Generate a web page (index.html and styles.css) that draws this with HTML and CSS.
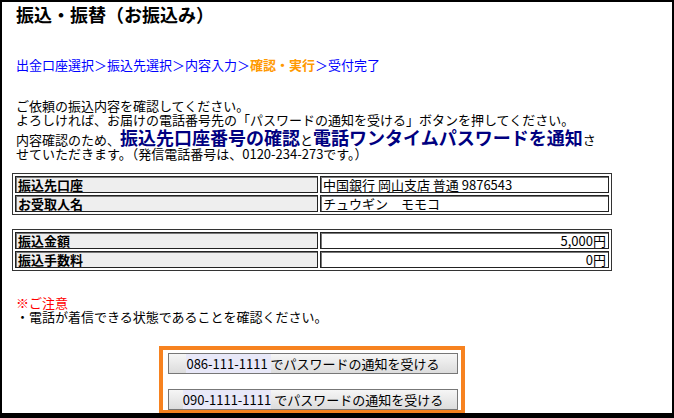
FILE: index.html
```html
<!DOCTYPE html>
<html lang="ja">
<head>
<meta charset="utf-8">
<title>振込・振替（お振込み）</title>
<link rel="stylesheet" href="styles.css">
</head>
<body>
<div class="frame">
  <div class="content">
    <h1 class="title">振込・振替（お振込み）</h1>
    <div class="steps">
      <span class="step">出金口座選択＞振込先選択＞内容入力＞</span><span class="step-current">確認・実行</span><span class="step">＞受付完了</span>
    </div>
    <div class="intro">
      <div class="intro-line">ご依頼の振込内容を確認してください。</div>
      <div class="intro-line">よろしければ、お届けの電話番号先の「パスワードの通知を受ける」ボタンを押してください。</div>
      <div class="intro-line intro-big">内容確認のため、<span class="emph">振込先口座番号の確認</span>と<span class="emph">電話ワンタイムパスワードを通知</span>さ</div>
      <div class="intro-line">せていただきます。（発信電話番号は、0120-234-273です。）</div>
    </div>

    <table class="info">
      <tr><th class="label">振込先口座</th><td class="value">中国銀行 岡山支店 普通 9876543</td></tr>
      <tr><th class="label">お受取人名</th><td class="value">チュウギン　モモコ</td></tr>
    </table>

    <table class="info info-second">
      <tr><th class="label">振込金額</th><td class="value num">5,000円</td></tr>
      <tr><th class="label">振込手数料</th><td class="value num">0円</td></tr>
    </table>

    <div class="notice">
      <div class="notice-head">※ご注意</div>
      <div class="notice-body">・電話が着信できる状態であることを確認ください。</div>
    </div>

    <div class="actions-wrap">
      <div class="actions">
        <button class="notify-btn" type="button"><span class="phone">086-111-1111 </span>でパスワードの通知を受ける</button>
        <button class="notify-btn" type="button"><span class="phone">090-1111-1111</span> でパスワードの通知を受ける</button>
      </div>
    </div>
  </div>
</div>
</body>
</html>
```

FILE: styles.css
```css
* { box-sizing: border-box; }

html, body {
  margin: 0;
  padding: 0;
  background: #ffffff;
}

body {
  font-family: "Noto Sans CJK JP", "Noto Sans", sans-serif;
  font-size: 13px;
  color: #000000;
}

.frame {
  width: 674px;
  height: 418px;
  border: 2px solid #000000;
  border-bottom-width: 5px;
  overflow: hidden;
}

.content {
  width: 600px;
  margin-left: 10px;
}

.title {
  margin: 0;
  padding-left: 4px;
  font-size: 18px;
  line-height: 24px;
  font-weight: bold;
}

.steps {
  margin-top: 31px;
  padding-left: 4px;
  line-height: 16px;
  font-size: 13px;
  white-space: nowrap;
}

.step { color: #0000ff; }

.step-current {
  color: #ff9900;
  font-weight: bold;
}

.intro {
  margin-top: 26px;
  padding-left: 4px;
  white-space: nowrap;
}

.intro-line {
  height: 14px;
  line-height: 14px;
}

.intro-line.intro-big {
  height: 20px;
  line-height: 20px;
}

.emph {
  font-size: 18px;
  line-height: 20px;
  font-weight: bold;
  color: #000080;
}

.info {
  width: 600px;
  margin-top: 12px;
  border: 1px solid #333333;
  border-spacing: 2px;
  table-layout: fixed;
}

.info-second { margin-top: 14px; }

.info th,
.info td {
  height: 17px;
  padding: 0 2px;
  border: 1px solid #222222;
  box-shadow: inset 1px 1px 0 #777777;
  font-size: 13px;
  line-height: 14px;
  white-space: nowrap;
}

.label {
  width: 303px;
  background: #eeeeee;
  font-weight: bold;
  text-align: left;
}

.value {
  background: #ffffff;
  font-weight: normal;
  text-align: left;
}

.num { text-align: right; }

.notice {
  margin-top: 25px;
  padding-left: 4px;
  line-height: 14px;
}

.notice-head { color: #ff0000; }

.actions-wrap {
  display: flex;
  justify-content: center;
  margin-top: 22px;
}

.actions {
  width: 306px;
  border: 4px solid #f7821f;
  padding: 3px 3px 0 5px;
  display: flex;
  flex-direction: column;
  gap: 15px;
}

.notify-btn {
  width: 290px;
  height: 21px;
  padding: 0;
  border: 1px solid #777777;
  background: linear-gradient(#f6f6f6, #dcdcdc);
  font-family: "Noto Sans CJK JP", "Noto Sans", sans-serif;
  font-size: 13px;
  line-height: 19px;
  color: #000000;
  text-align: center;
  white-space: pre;
}

.phone { background: #e8e8f8; }
```
